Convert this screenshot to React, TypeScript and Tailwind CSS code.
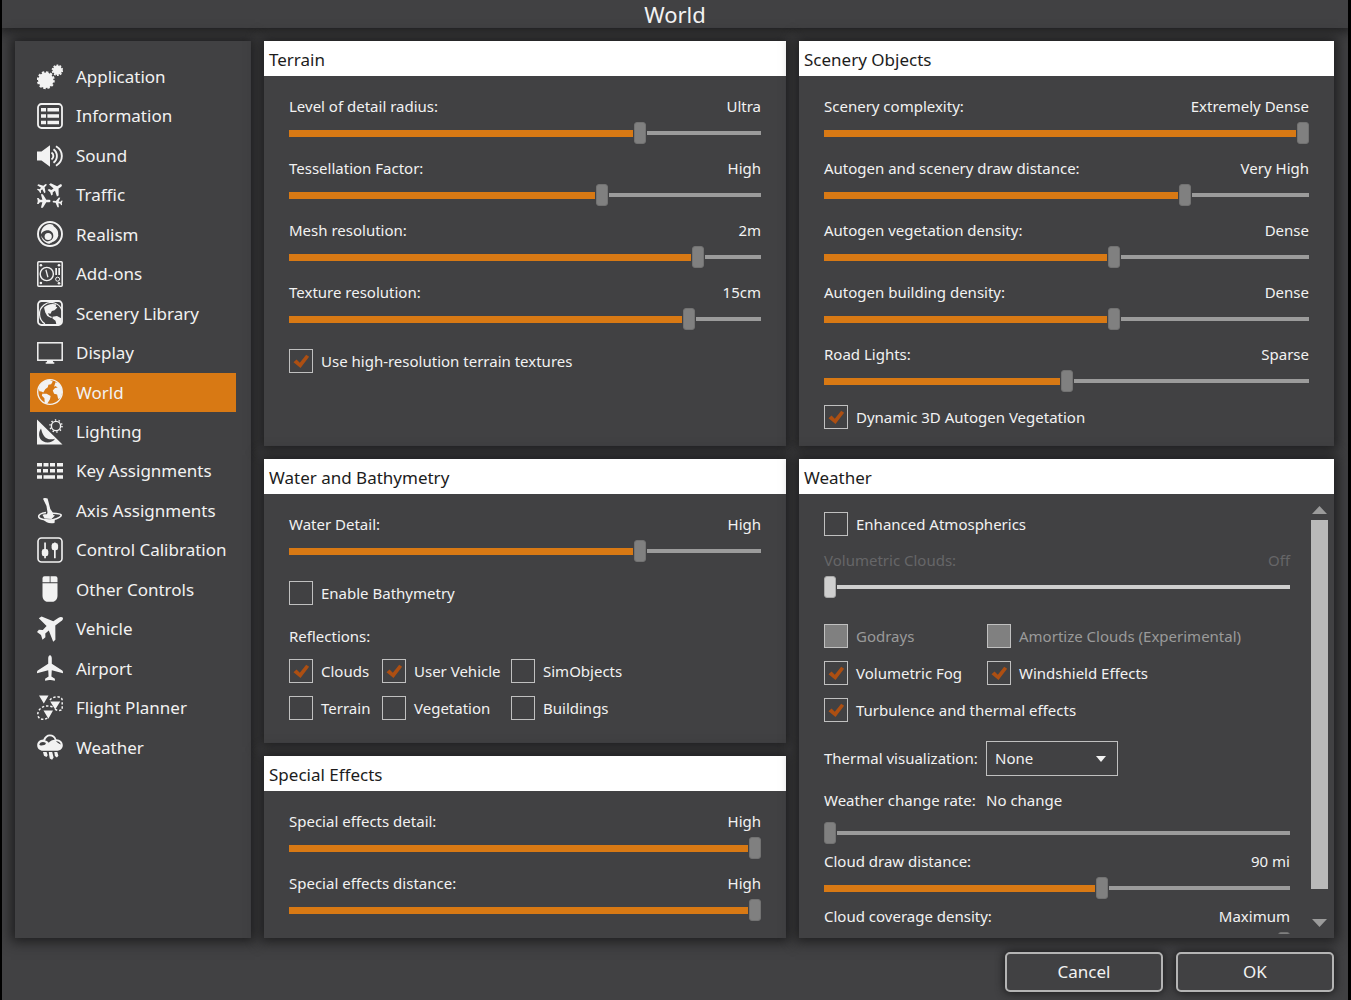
import React, { useId, useState } from 'react'

const PLANE =
  'M13 0.3c1.100 0 1.800 1.400 1.800 3.200v5.300l10.500 6.800c.6.400.7 1.200.7 2.600l-11.200-2.900-.4 6.200 3.500 2.200v2.100l-4.100-.8h-1.600l-4.100.8v-2.100l3.500-2.200-.4-6.200L0 18.200c0-1.400.1-2.200.7-2.600l10.500-6.800V3.500c0-1.800.7-3.200 1.800-3.200z'

const JET =
  'M13-1c1.800 0 2.500 1.800 2.500 3.500v5.300L27 15v4l-11.500-3v5l4 3v3L13 25.500 6.500 27v-3l4-3v-5L-1 19v-4l11.500-7.200V2.500C10.500.8 11.200-1 13-1z'

const Svg: React.FC<{ children: React.ReactNode }> = ({ children }) => (
  <svg viewBox="0 0 26 26" className="w-[26px] h-[26px] shrink-0" fill="currentColor" aria-hidden="true">
    {children}
  </svg>
)

const GearsIcon = () => (
  <Svg>
    <circle cx="8.800" cy="16.200" r="7.700" />
    <circle cx="8.800" cy="16.200" r="8" fill="none" stroke="currentColor" strokeWidth="2" strokeDasharray="2.400 1.789" />
    <circle cx="20.400" cy="6.300" r="4.700" />
    <circle cx="20.400" cy="6.300" r="5" fill="none" stroke="currentColor" strokeWidth="1.500" strokeDasharray="1.800 1.342" />
  </Svg>
)

const ListIcon = () => (
  <Svg>
    <rect x="1" y="1" width="24" height="24" rx="3.5" fill="none" stroke="currentColor" strokeWidth="1.8" />
    <path d="M4 5h5v3.4H4zM10.4 5H22v3.4H10.4zM4 11.3h5v3.4H4zM10.4 11.3H22v3.4H10.4zM4 17.8h5v3.4H4zM10.4 17.8H22v3.4H10.4z" />
  </Svg>
)

const SoundIcon = () => (
  <Svg>
    <path d="M0 8.500h4.500L13 2.300v21.400l-8.500-6.200H0z" />
    <g fill="none" stroke="currentColor" strokeWidth="1.900">
      <path d="M14.500 9.500a4.200 4.200 0 0 1 0 7" />
      <path d="M16.500 6.200a8.500 8.500 0 0 1 0 13.600" />
      <path d="M19 3.200c7.800 4.800 7.800 14.800 0 19.600" />
    </g>
  </Svg>
)

const TrafficIcon = () => (
  <Svg>
    <path d={JET} transform="translate(5.500 5.800) rotate(48) scale(.38) translate(-13 -13)" />
    <path d={JET} transform="translate(18.600 6.800) rotate(57) scale(.52) translate(-13 -13)" />
    <path d={JET} transform="translate(6.800 19) rotate(90) scale(.48) translate(-13 -13)" />
    <path d={JET} transform="translate(20.500 20.200) rotate(-82) scale(.35) translate(-13 -13)" />
  </Svg>
)

const RealismIcon = () => (
  <Svg>
    <circle cx="13" cy="13" r="12" fill="none" stroke="currentColor" strokeWidth="1.900" />
    <path d="M13 3c3 .3 5.500 2 7.300 4.800 2.300 4.200 1.200 9.200-2 11.800-3.200 2.300-7 2.600-10 1.200 4.800-.2 7.700-2.300 8-5.600.3-3.900-3.400-6.700-7.500-5.600-2 .5-3.600 1.800-4.800 3.600C3.800 8 7.500 3.200 13 3z" />
    <path d="M4 14.500c.8 4.400 4 7.800 8.500 8.200l3-1.700c-5 .8-9-1.500-11.500-6.500z" />
    <circle cx="11.200" cy="15.500" r="3.600" />
    <path d="M16.500 4.200c3.600 2.300 5.700 5.500 5.600 9.800" fill="none" stroke="#414143" strokeWidth="1.300" />
  </Svg>
)

const AddonsIcon = () => (
  <Svg>
    <rect x=".8" y=".8" width="24.400" height="24.400" rx="1" fill="none" stroke="currentColor" strokeWidth="1.500" />
    <circle cx="9.800" cy="13" r="6.600" fill="none" stroke="currentColor" strokeWidth="1.400" />
    <path d="M8.300 9l1.200-.4 2 7.300-1.200.5z" />
    <path d="M18.300 7h1.700v7h-1.700zM21.300 7H23v7h-1.700z" />
    <circle cx="20.600" cy="18.200" r="2" fill="none" stroke="currentColor" />
    <circle cx="3.900" cy="4.300" r="1.300" />
    <circle cx="22" cy="4.300" r="1.300" />
    <circle cx="3.900" cy="22" r="1.300" />
    <circle cx="22" cy="22.200" r="1.300" />
  </Svg>
)

const SceneryIcon = () => (
  <Svg>
    <rect x="1" y="1" width="24" height="24" rx="3.500" fill="none" stroke="currentColor" strokeWidth="1.800" />
    <path d="M8 23.800A11.500 11.500 0 1 1 25 10.500" fill="none" stroke="currentColor" strokeWidth="1.200" />
    <path d="M7 7.500c3-3.200 8-4.300 12.500-3l-.9 1.700 1.800 1.300-2.900 2.800-2.600.6-1.400 2.800-2.700-.5 1.500 2.600 2.800 1.200-1 1-3.800-1.900-2-3.500z" />
    <path d="M15.500 16.700l4.500-.6 4.200 2.200.5 5.500-5.300.8-.9-3.800-3-2.300z" />
  </Svg>
)

const DisplayIcon = () => (
  <Svg>
    <rect x=".8" y="2.800" width="24.400" height="17.400" fill="none" stroke="currentColor" strokeWidth="1.500" />
    <path d="M10.500 20h5l.8 2.200h1v1.500H8.700v-1.500h1z" />
  </Svg>
)

const WorldIcon = () => (
  <Svg>
    <circle cx="13" cy="13" r="12.300" fill="none" stroke="currentColor" strokeWidth="1.300" />
    <path d="M2.500 6.500C4.500 3.200 8 1 12.500.8l3.300 1.700-1.700 2.800-2.700.5-.6 2.400-2.600 2-1.900 3.400-2-1.200-2-.2-.4-2.500z" />
    <path d="M5.300 14.700l4.300 0 4 2.200-.6 3.300-2.800 4.600-2.400-.8-.4-4.700-2.500-2.500z" />
    <path d="M18.500 3.200l3.700 1.200 2.600 5.200.4 3.900-1.800 5.400-2.200 1-1.100-4.400-3-.7-1.300-3.300 2.200-2.500 2.800-.4-2.600-1.500-1.200.8z" />
  </Svg>
)

const LightingIcon = () => (
  <Svg>
    <path
      fillRule="evenodd"
      d="M0 .5L25.500 25.500H0zM4 9.500C.8 14 1.800 20 6 22.300c4.300 2.300 9.600 1.200 12-2.600-4.500 1.300-8.800.4-11-2.800C5.200 14.500 4.700 12 4 9.500z"
    />
    <circle cx="19" cy="7" r="4.600" fill="none" stroke="currentColor" strokeWidth="1.400" />
    <circle cx="19" cy="7" r="6" fill="none" stroke="currentColor" strokeWidth="1.500" strokeDasharray="1.400 2.370" />
  </Svg>
)

const KeyboardIcon = () => (
  <Svg>
    <path d="M0 5h5v3.600H0zM6.500 5h5v3.600h-5zM13 5h5v3.600h-5zM20 5h6v3.600h-6zM0 11h4v3.600H0zM6 11h5v3.600H6zM13 11h5v3.600h-5zM20 11h6v3.600h-6zM0 17.200h5v3.600H0zM6.500 17.200H18v3.600H6.500zM20 17.200h6v3.600h-6z" />
  </Svg>
)

const JoystickIcon = () => (
  <Svg>
    <path d="M6 .8C6.700-.2 9.200-.2 10.600.6l.8 3 1.900 7.400 3.200 4.500-1.500 4.500-6-.6 1.500-5-1-6.500z" />
    <path d="M9 14.500c-4 .6-7.500 2.300-7.300 4.200.3 2.600 8 4 14 3 5.600-1 9.200-3.400 8.300-5-.6-1-3.600-1.300-8-1.500" fill="none" stroke="currentColor" strokeWidth="1.600" />
    <path d="M5.500 16.800c3.500-.8 9-.5 12.500.8l-3.500 3.400-7-.6z" />
    <path d="M6.500 21.500c2 3.200 6.500 4.600 11 3.400l.3-3z" />
  </Svg>
)

const CalibrationIcon = () => (
  <Svg>
    <rect x="1" y="1" width="24" height="24" rx="3.500" fill="none" stroke="currentColor" strokeWidth="1.600" />
    <path d="M7.200 5.500h1.700v15.700H7.200zM17 5.500h1.700v15.700H17z" />
    <rect x="4.800" y="12" width="6.500" height="7.300" rx="2.400" />
    <rect x="14.600" y="6" width="6.500" height="7.300" rx="2.400" />
  </Svg>
)

const MouseIcon = () => (
  <Svg>
    <path d="M5.500 6.300V2.200Q5.500.3 7.500.3h5.200v6zM13.500.3h5Q20.500.3 20.500 2.200v4.100h-7zM5.500 7.200h15v12.300c0 4-2.500 6.300-5.500 6.300h-4c-3 0-5.500-2.300-5.500-6.300z" />
  </Svg>
)

const VehicleIcon = () => (
  <Svg>
    <path d="M25.900 1.800c.3 1.300-.4 2.400-1.900 3.500l-5.700 4.300.1 14.200-2.200 1.900-4.400-11.200-3.500 2.900.1 3.800-2.900 2.600-1.500-4.700L0 15.900l1.900-2.200 3.900.4 3.800-4.200L1.800 2.300 4.600.5l11.700 4.800 5.300-3.500c1.600-1 3.300-1 4.300 0z" />
  </Svg>
)

const AirportIcon = () => (
  <Svg>
    <path d={PLANE} />
  </Svg>
)

const PlannerIcon = () => (
  <Svg>
    <path d="M2 .5h9.500L6.800 8.500zM13.200 6.500h10l-5 8zM6.500 15.500H16l-4.600 8.300z" />
    <path
      d="M13 5.200c2-4 12-5 12.200 0v9.500c-2.500 1.400-6 .8-8-1.200M15.500 12c-8-3.500-15 2-14.700 7.500.2 5 6 6 9.500 3.500"
      fill="none"
      stroke="currentColor"
      strokeWidth="1.500"
      strokeDasharray="2.400 1.800"
    />
  </Svg>
)

const RainIcon = () => (
  <Svg>
    <path
      fillRule="evenodd"
      d="M6.300 5.600C7.300 2.400 9.800.4 12.800.4c3.300 0 5.800 1.900 6.500 4.900 3.700.1 6.500 2.600 6.500 5.900 0 3.400-2.700 5.500-6 5.500H6C2.700 16.700.2 14.400.2 11.200c0-3 2.400-5.500 6.100-5.600zM8.200 6.500c1.500.3 2.700 1 3.500 2.200 1.700-1.800 3.700-2.900 6-3-.7-2.200-2.400-3.500-4.800-3.500-2.200 0-4 1.600-4.700 4.300zM2.300 10.500c.4 1.200 2.500 1.400 5 .6 1.300-.5 1.800-1.500 1.300-2.300-2.300-1.400-5.600-.9-6.300 1.700zM19 7.300c1.600 1.200 2.600 2.400 4.800 3.200-.4-2-2.200-3.400-4.800-3.200z"
    />
    <path d="M6 18h3.600l1.100 3.300-1.200 1.600-2.500-1.200zM11.800 18h3.400l1.400 5.500-1.500 2.300-2.300-1.200-.6-3.200zM17.300 18h3l1.100 3.800-1.500 1.800-2-1.600z" />
  </Svg>
)

const NAV = [
  { label: 'Application', icon: GearsIcon },
  { label: 'Information', icon: ListIcon },
  { label: 'Sound', icon: SoundIcon },
  { label: 'Traffic', icon: TrafficIcon },
  { label: 'Realism', icon: RealismIcon },
  { label: 'Add-ons', icon: AddonsIcon },
  { label: 'Scenery Library', icon: SceneryIcon },
  { label: 'Display', icon: DisplayIcon },
  { label: 'World', icon: WorldIcon },
  { label: 'Lighting', icon: LightingIcon },
  { label: 'Key Assignments', icon: KeyboardIcon },
  { label: 'Axis Assignments', icon: JoystickIcon },
  { label: 'Control Calibration', icon: CalibrationIcon },
  { label: 'Other Controls', icon: MouseIcon },
  { label: 'Vehicle', icon: VehicleIcon },
  { label: 'Airport', icon: AirportIcon },
  { label: 'Flight Planner', icon: PlannerIcon },
  { label: 'Weather', icon: RainIcon },
]

interface RangeProps {
  id: string
  initial: number
  disabled?: boolean
}

const Range: React.FC<RangeProps> = ({ id, initial, disabled }) => {
  const [value, setValue] = useState(initial)
  return (
    <input
      id={id}
      type="range"
      min={0}
      max={100}
      step="any"
      value={value}
      disabled={disabled}
      onChange={(e) => setValue(Number(e.target.value))}
      className="block w-full h-[30px] appearance-none bg-transparent bg-no-repeat bg-left bg-[image:linear-gradient(#d87914,#d87914),linear-gradient(#9b9b9b,#9b9b9b)] disabled:bg-[image:linear-gradient(#cfcfcf,#cfcfcf),linear-gradient(#cfcfcf,#cfcfcf)] [&::-webkit-slider-thumb]:appearance-none [&::-webkit-slider-thumb]:w-3 [&::-webkit-slider-thumb]:h-[22px] [&::-webkit-slider-thumb]:rounded-[3px] [&::-webkit-slider-thumb]:border [&::-webkit-slider-thumb]:border-[#727272] [&::-webkit-slider-thumb]:bg-[#808080] [&::-webkit-slider-thumb]:shadow-[0_0_0_1px_#414143] disabled:[&::-webkit-slider-thumb]:bg-[#cfcfcf] disabled:[&::-webkit-slider-thumb]:border-[#a8a8a8]"
      style={{ backgroundSize: `${value}% 7px, 100% 4px` }}
    />
  )
}

interface SliderProps extends Omit<RangeProps, 'id'> {
  label: string
  value: string
}

const Slider: React.FC<SliderProps> = ({ label, value, initial, disabled }) => {
  const id = useId()
  return (
    <div>
      <div className={`flex justify-between leading-5 pb-0.5 ${disabled ? 'text-[#666668]' : ''}`}>
        <label htmlFor={id}>{label}</label>
        <span>{value}</span>
      </div>
      <Range id={id} initial={initial} disabled={disabled} />
    </div>
  )
}

interface CheckProps {
  label: string
  checked?: boolean
  disabled?: boolean
}

const Check: React.FC<CheckProps> = ({ label, checked = false, disabled }) => (
  <label className={`flex items-center gap-2 h-6 whitespace-nowrap ${disabled ? 'text-[#9a9a9a]' : ''}`}>
    <span className="grid shrink-0">
      <input
        type="checkbox"
        defaultChecked={checked}
        disabled={disabled}
        className="peer col-start-1 row-start-1 appearance-none w-6 h-6 border border-[#c0c0c0] disabled:bg-[#808080]"
      />
      <svg
        viewBox="0 0 24 24"
        className="col-start-1 row-start-1 w-6 h-6 pointer-events-none invisible peer-checked:visible"
        aria-hidden="true"
      >
        <path d="M4.500 13.200l3-2.700 3.300 3.300 6.400-8 2.900 2-8.600 11.200z" fill="#ad4f12" />
      </svg>
    </span>
    {label}
  </label>
)

const Panel: React.FC<{ title: string; children: React.ReactNode }> = ({ title, children }) => (
  <section className="flex flex-col bg-[#414143] shadow-[0_0_12px_4px_#1e1e1f]">
    <h2 className="h-[35px] pl-[5px] pt-1 bg-white text-[17px] leading-[30px] text-[#1c1c1c]">{title}</h2>
    {children}
  </section>
)

const DialogButton: React.FC<{ children: React.ReactNode }> = ({ children }) => (
  <button
    type="button"
    className="w-[158px] h-10 rounded-[5px] border-2 border-[#b4b4b4] bg-[#414143] text-[17px] shadow-[0_0_9px_1px_#1b1b1c]"
  >
    {children}
  </button>
)

export default function App() {
  return (
    <div className="min-h-screen flex flex-col overflow-hidden bg-[#414143] border-l-2 border-r-3 border-black font-['Noto_Sans',sans-serif] text-[15px] text-[#f2f2f2]">
      {/* Title bar */}
      <header className="h-7 text-center shadow-[0_0_12px_4px_#1e1e1f]">
        <h1 className="text-[22px] leading-7">World</h1>
      </header>

      <main className="flex-1 grid grid-cols-[236px_minmax(0,1fr)] gap-[13px] pl-[13px] pr-3.5 pt-[13px]">
        {/* Sidebar */}
        <nav className="bg-[#414143] px-[15px] pt-4 shadow-[0_0_12px_4px_#1e1e1f]">
          <ul className="grid auto-rows-fr h-[710px] text-[17px]">
            {NAV.map(({ label, icon: Icon }) => (
              <li key={label} className="flex">
                <a
                  href="#"
                  aria-current={label === 'World' ? 'page' : undefined}
                  className={`flex flex-1 items-center gap-[13px] pl-[7px] whitespace-nowrap ${
                    label === 'World' ? 'bg-[#d87914]' : ''
                  }`}
                >
                  <Icon />
                  {label}
                </a>
              </li>
            ))}
          </ul>
        </nav>

        {/* Settings */}
        <div className="grid grid-cols-[minmax(0,522fr)_minmax(0,535fr)] content-start gap-[13px]">
          <Panel title="Terrain">
            <div className="flex flex-col gap-2.5 px-[25px] pt-5">
              <Slider label="Level of detail radius:" value="Ultra" initial={75} />
              <Slider label="Tessellation Factor:" value="High" initial={66.7} />
              <Slider label="Mesh resolution:" value="2m" initial={87.5} />
              <Slider label="Texture resolution:" value="15cm" initial={85.7} />
            </div>
            <div className="px-[25px] pt-[15px]">
              <Check label="Use high-resolution terrain textures" checked />
            </div>
          </Panel>

          <Panel title="Scenery Objects">
            <div className="flex flex-col gap-2.5 px-[25px] pt-5">
              <Slider label="Scenery complexity:" value="Extremely Dense" initial={100} />
              <Slider label="Autogen and scenery draw distance:" value="Very High" initial={75} />
              <Slider label="Autogen vegetation density:" value="Dense" initial={60} />
              <Slider label="Autogen building density:" value="Dense" initial={60} />
              <Slider label="Road Lights:" value="Sparse" initial={50} />
            </div>
            <div className="px-[25px] pt-[9px] pb-[17px]">
              <Check label="Dynamic 3D Autogen Vegetation" checked />
            </div>
          </Panel>

          <div className="flex flex-col gap-[13px]">
            <Panel title="Water and Bathymetry">
              <div className="px-[25px] pt-5 pb-[23px]">
                <Slider label="Water Detail:" value="High" initial={75} />
                <div className="pt-[15px]">
                  <Check label="Enable Bathymetry" />
                </div>
                <fieldset>
                  <legend className="pt-5 leading-[22px]">Reflections:</legend>
                  <div className="grid grid-cols-[93px_129px_auto] gap-y-[13px] pt-3">
                    <Check label="Clouds" checked />
                    <Check label="User Vehicle" checked />
                    <Check label="SimObjects" />
                    <Check label="Terrain" />
                    <Check label="Vegetation" />
                    <Check label="Buildings" />
                  </div>
                </fieldset>
              </div>
            </Panel>

            <Panel title="Special Effects">
              <div className="flex flex-col gap-2.5 px-[25px] pt-5 pb-[13px]">
                <Slider label="Special effects detail:" value="High" initial={100} />
                <Slider label="Special effects distance:" value="High" initial={100} />
              </div>
            </Panel>
          </div>

          <Panel title="Weather">
            <div className="flex flex-1 contain-size pb-1 pr-1.5">
              <div className="flex-1 min-w-0 overflow-hidden pl-[25px] pr-[21px] pt-[18px]">
                <Check label="Enhanced Atmospherics" />
                <div className="pt-3.5">
                  <Slider label="Volumetric Clouds:" value="Off" initial={0} disabled />
                </div>
                <div className="grid grid-cols-[163px_auto] gap-y-[13px] pt-[22px]">
                  <Check label="Godrays" disabled />
                  <Check label="Amortize Clouds (Experimental)" disabled />
                  <Check label="Volumetric Fog" checked />
                  <Check label="Windshield Effects" checked />
                  <div className="col-span-2">
                    <Check label="Turbulence and thermal effects" checked />
                  </div>
                </div>
                <div className="grid grid-cols-[162px_auto] items-center pt-[19px]">
                  <label htmlFor="thermal">Thermal visualization:</label>
                  <div className="grid w-[132px] items-center">
                    <select
                      id="thermal"
                      className="col-start-1 row-start-1 appearance-none h-[35px] border border-[#c0c0c0] bg-transparent pl-2"
                    >
                      <option>None</option>
                    </select>
                    <svg
                      viewBox="0 0 10 6"
                      className="col-start-1 row-start-1 justify-self-end mr-3 w-2.5 h-1.5 pointer-events-none"
                      aria-hidden="true"
                    >
                      <path d="M0 0h10L5 6z" fill="#f2f2f2" />
                    </svg>
                  </div>
                </div>
                <div className="grid grid-cols-[162px_auto] leading-[22px] pt-[13px] pb-[7px]">
                  <label htmlFor="change-rate">Weather change rate:</label>
                  <span>No change</span>
                </div>
                <Range id="change-rate" initial={0} />
                <div className="flex flex-col gap-[3px] pt-[3px]">
                  <Slider label="Cloud draw distance:" value="90 mi" initial={60} />
                  <Slider label="Cloud coverage density:" value="Maximum" initial={100} />
                </div>
              </div>

              {/* Scrollbar */}
              <div className="flex flex-col items-center w-[17px] pt-3 pb-[7px]">
                <button type="button" aria-label="Scroll up">
                  <svg viewBox="0 0 15 8" className="block w-[15px] h-2">
                    <path d="M0 8h15L7.500 0z" fill="#9b9b9b" />
                  </svg>
                </button>
                <div className="flex-1 w-full mt-1.5 mb-[30px] bg-[#b9b9b9]" />
                <button type="button" aria-label="Scroll down">
                  <svg viewBox="0 0 15 8" className="block w-[15px] h-2">
                    <path d="M0 0h15L7.500 8z" fill="#9b9b9b" />
                  </svg>
                </button>
              </div>
            </div>
          </Panel>
        </div>
      </main>

      {/* Footer buttons */}
      <footer className="flex justify-end gap-[13px] pr-3.5 pt-3.5 pb-2">
        <DialogButton>Cancel</DialogButton>
        <DialogButton>OK</DialogButton>
      </footer>
    </div>
  )
}
